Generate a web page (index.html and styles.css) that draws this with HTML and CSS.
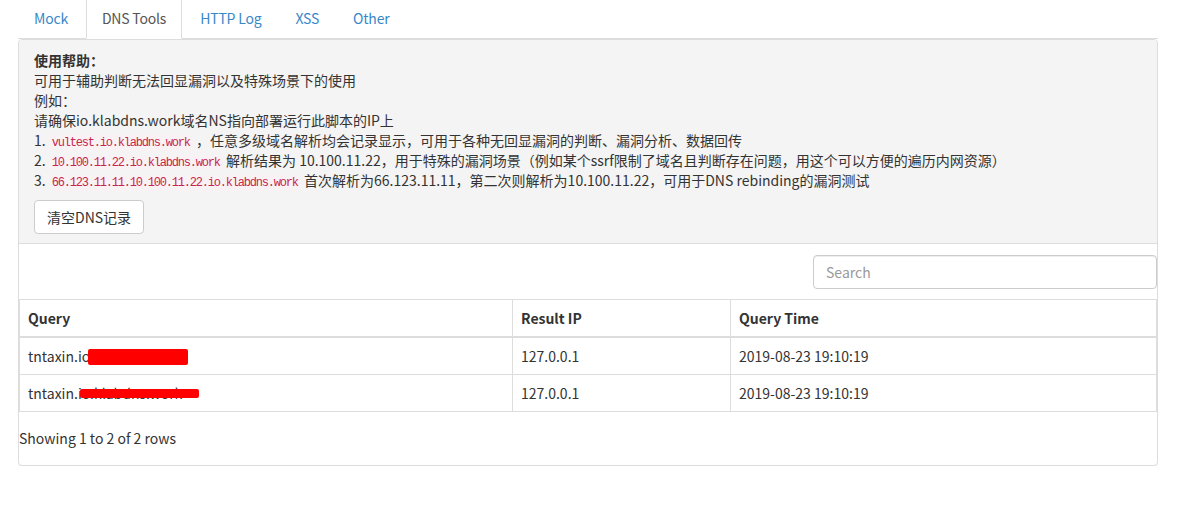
FILE: index.html
```html
<!DOCTYPE html>
<html lang="zh-CN">
<head>
<meta charset="utf-8">
<title>DNS Tools</title>
<link rel="stylesheet" href="styles.css">
</head>
<body>
<div class="wrap">
  <ul class="tabs">
    <li class="tab"><a href="#">Mock</a></li>
    <li class="tab active"><a href="#">DNS Tools</a></li>
    <li class="tab"><a href="#">HTTP Log</a></li>
    <li class="tab"><a href="#">XSS</a></li>
    <li class="tab"><a href="#">Other</a></li>
  </ul>
  <div class="panel">
    <div class="panel-heading">
      <div class="line"><b>使用帮助：</b></div>
      <div class="line">可用于辅助判断无法回显漏洞以及特殊场景下的使用</div>
      <div class="line">例如：</div>
      <div class="line">请确保io.klabdns.work域名NS指向部署运行此脚本的IP上</div>
      <div class="line">1. <code>vultest.io.klabdns.work</code> ，任意多级域名解析均会记录显示，可用于各种无回显漏洞的判断、漏洞分析、数据回传</div>
      <div class="line">2. <code>10.100.11.22.io.klabdns.work</code> 解析结果为 10.100.11.22，用于特殊的漏洞场景（例如某个ssrf限制了域名且判断存在问题，用这个可以方便的遍历内网资源）</div>
      <div class="line">3. <code>66.123.11.11.10.100.11.22.io.klabdns.work</code> 首次解析为66.123.11.11，第二次则解析为10.100.11.22，可用于DNS rebinding的漏洞测试</div>
      <button class="btn">清空DNS记录</button>
    </div>
    <div class="panel-body">
      <div class="toolbar">
        <input class="search" type="text" placeholder="Search">
      </div>
      <table class="table">
        <thead>
          <tr><th class="c1">Query</th><th class="c2">Result IP</th><th class="c3">Query Time</th></tr>
        </thead>
        <tbody>
          <tr>
            <td><span class="q">tntaxin.io.klabdns.work<span class="redact r1"></span></span></td>
            <td>127.0.0.1</td>
            <td>2019-08-23 19:10:19</td>
          </tr>
          <tr>
            <td><span class="q">tntaxin.io.klabdns.work<span class="redact r2"></span></span></td>
            <td>127.0.0.1</td>
            <td>2019-08-23 19:10:19</td>
          </tr>
        </tbody>
      </table>
      <div class="pager">Showing 1 to 2 of 2 rows</div>
    </div>
  </div>
</div>
</body>
</html>
```

FILE: styles.css
```css
* { box-sizing: border-box; }
html, body { margin: 0; padding: 0; background: #fff; }
body {
  font-family: "Noto Sans CJK SC", "Lato", sans-serif;
  font-size: 14px;
  line-height: 20px;
  color: #333;
}
.wrap {
  width: 1140px;
  margin-left: 18px;
}
.tabs {
  list-style: none;
  margin: 0;
  padding: 0;
  display: flex;
  border-bottom: 1px solid #ddd;
}
.tab {
  margin-right: 2px;
  margin-bottom: -1px;
}
.tab a {
  display: block;
  padding: 8px 15px 10px;
  line-height: 20px;
  border: 1px solid transparent;
  border-top: 0;
  color: #3a87c8;
  text-decoration: none;
  letter-spacing: -0.2px;
}
.tab.active a {
  color: #555;
  background: #fff;
  border-color: #ddd;
  border-bottom-color: transparent;
}
.panel {
  border: 1px solid #ddd;
  border-radius: 4px;
  box-shadow: 0 1px 1px rgba(0,0,0,.05);
  background: #fff;
}
.panel-heading {
  background: #f4f4f4;
  border-bottom: 1px solid #ddd;
  border-radius: 3px 3px 0 0;
  padding: 10px 15px 9px;
}
.line { line-height: 20px; white-space: nowrap; }
code {
  font-family: "Liberation Mono", "DejaVu Sans Mono", monospace;
  font-size: 12px;
  line-height: 12px;
  letter-spacing: -1.2px;
  color: #c7254e;
  background: #f9f2f4;
  padding: 1px 3px;
  border-radius: 3px;
}
.btn {
  display: block;
  margin-top: 10px;
  font-family: inherit;
  font-size: 14px;
  line-height: 20px;
  color: #333;
  background: #fff;
  border: 1px solid #ccc;
  border-radius: 4px;
  padding: 6px 12px;
  height: 34px;
  white-space: nowrap;
}
.panel-body { padding: 0; }
.toolbar {
  display: flex;
  justify-content: flex-end;
  padding: 11px 0 10px;
}
.search {
  width: 344px;
  height: 34px;
  border: 1px solid #ccc;
  border-radius: 4px;
  padding: 6px 12px;
  font-family: inherit;
  font-size: 14px;
  color: #555;
  box-shadow: inset 0 1px 1px rgba(0,0,0,.075);
}
.search::placeholder { color: #999; }
.table {
  width: 1138px;
  border-collapse: collapse;
  border: 1px solid #ddd;
  table-layout: fixed;
}
.table th, .table td {
  padding: 8px;
  line-height: 20px;
  text-align: left;
  border: 1px solid #ddd;
  vertical-align: top;
}
.table th { font-weight: bold; border-bottom: 2px solid #ddd; }
.c1 { width: 493px; }
.c2 { width: 218px; }
.q { position: relative; display: inline-block; }
.redact {
  position: absolute;
  background: #ff0000;
  border-radius: 2px;
}
.r1 { left: 60px; top: 3px; width: 100px; height: 16px; }
.r2 { left: 52px; top: 6px; width: 119px; height: 9px; }
.pager {
  padding: 9px 0 10px;
  line-height: 34px;
}
```
